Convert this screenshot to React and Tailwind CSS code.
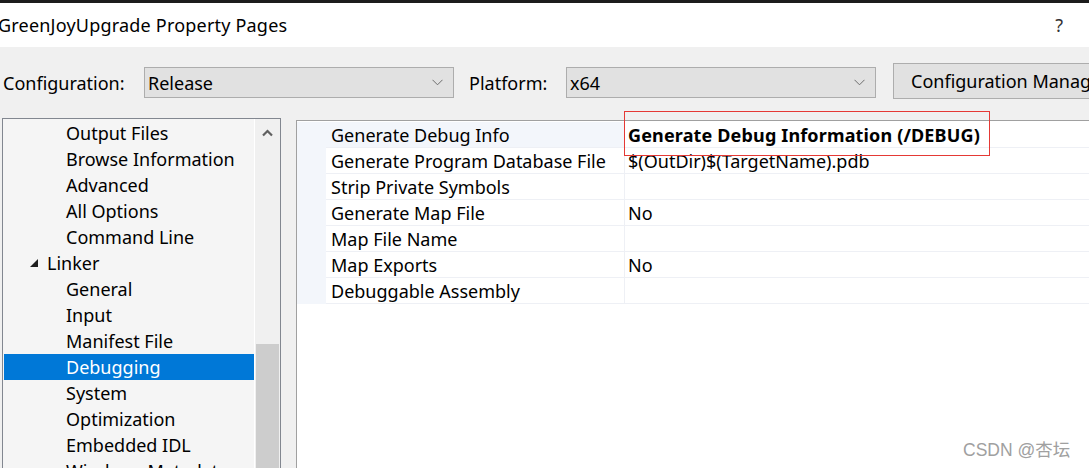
import React from "react";

const font = { fontFamily: "'Noto Sans', 'Open Sans', sans-serif" };

const treeItems = [
  { label: "Output Files", indent: 66 },
  { label: "Browse Information", indent: 66 },
  { label: "Advanced", indent: 66 },
  { label: "All Options", indent: 66 },
  { label: "Command Line", indent: 66 },
  { label: "Linker", indent: 47, expander: true },
  { label: "General", indent: 66 },
  { label: "Input", indent: 66 },
  { label: "Manifest File", indent: 66 },
  { label: "Debugging", indent: 66, selected: true },
  { label: "System", indent: 66 },
  { label: "Optimization", indent: 66 },
  { label: "Embedded IDL", indent: 66 },
  { label: "Windows Metadata", indent: 66 },
];

const props = [
  { name: "Generate Debug Info", value: "Generate Debug Information (/DEBUG)", bold: true, active: true },
  { name: "Generate Program Database File", value: "$(OutDir)$(TargetName).pdb" },
  { name: "Strip Private Symbols", value: "" },
  { name: "Generate Map File", value: "No" },
  { name: "Map File Name", value: "" },
  { name: "Map Exports", value: "No" },
  { name: "Debuggable Assembly", value: "" },
];

function Chevron() {
  return (
    <svg width="11" height="7" viewBox="0 0 11 7" className="shrink-0">
      <path d="M0.5 0.8 L5.5 5.8 L10.5 0.8" fill="none" stroke="#6d6d6d" strokeWidth="1" />
    </svg>
  );
}

function Dropdown({ value }) {
  return (
    <div className="mt-[3px] flex h-[31px] w-[310px] shrink-0 items-center justify-between border border-[#adadad] bg-[#e1e1e1] pl-[3px] pr-[10px] text-[18px] text-black">
      <span className="pt-[1px]">{value}</span>
      <Chevron />
    </div>
  );
}

export default function App() {
  return (
    <div className="relative h-[468px] w-[1089px] overflow-hidden bg-[#f0f0f0] text-black" style={font}>
      <div className="h-[3px] bg-[#1c1c1c]" />
      <div className="flex h-[44px] items-center justify-between bg-white pr-[26px]">
        <span className="-ml-[2px] text-[18px] leading-none tracking-[0.2px]">GreenJoyUpgrade Property Pages</span>
        <span className="text-[18px] leading-none text-[#333]">?</span>
      </div>

      <div className="flex items-center pt-[16px]">
        <span className="ml-[3px] w-[141px] shrink-0 pt-[4px] text-[18px]">Configuration:</span>
        <Dropdown value="Release" />
        <span className="ml-[15px] w-[97px] shrink-0 pt-[4px] text-[18px]">Platform:</span>
        <Dropdown value="x64" />
        <div className="ml-[17px] flex h-[36px] shrink-0 items-center whitespace-nowrap border border-[#adadad] bg-[#e1e1e1] pl-[17px] pr-[20px] text-[18px]">
          Configuration Manager...
        </div>
      </div>

      <div className="mt-[19px] flex items-start">
        <div className="ml-[2px] flex h-[360px] w-[279px] shrink-0 border-l border-t border-r border-[#828790] bg-[#f5f5f5]">
          <div className="flex-1 pt-[1px]">
            {treeItems.map((it) => (
              <div
                key={it.label}
                className={`relative flex h-[26px] items-center whitespace-nowrap text-[18px] ${
                  it.selected ? "ml-[1px] bg-[#0078d7] text-white" : ""
                }`}
                style={{ paddingLeft: it.selected ? it.indent - 4 : it.indent - 3 }}
              >
                {it.expander && (
                  <svg width="9" height="9" viewBox="0 0 9 9" className="absolute left-[27px] top-[9px]">
                    <polygon points="8,0 8,8 0,8" fill="#1e1e1e" />
                  </svg>
                )}
                {it.label}
              </div>
            ))}
          </div>
          <div className="flex w-[26px] flex-col border-l border-white bg-[#f0f0f0]">
            <div className="flex h-[26px] items-center justify-center pt-[2px]">
              <svg width="11" height="8" viewBox="0 0 11 8">
                <path d="M1 6.5 L5.5 2 L10 6.5" fill="none" stroke="#606060" strokeWidth="2.2" />
              </svg>
            </div>
            <div className="h-[199px]" />
            <div className="mx-[1px] flex-1 bg-[#cdcdcd]" />
          </div>
        </div>

        <div className="ml-[15px] mt-[2px] h-[360px] flex-1 border-l border-t border-[#a0a0a0] bg-white">
          <div className="flex pt-[1px]">
            <div className="w-[29px] shrink-0 bg-[#f3f6fb]" />
            <div>
              {props.map((p) => (
                <div key={p.name} className="flex h-[26px] border-b border-[#eef0f5] text-[18px]">
                  <div
                    className={`flex w-[299px] items-center whitespace-nowrap border-r border-[#eef0f5] pl-[5px] pt-[1px] ${
                      p.active ? "bg-[#f3f6fb]" : ""
                    }`}
                  >
                    {p.name}
                  </div>
                  <div
                    className={`flex w-[466px] items-center whitespace-nowrap pl-[3px] pt-[1px] ${
                      p.bold ? "font-bold tracking-[0.15px]" : ""
                    }`}
                  >
                    {p.value}
                  </div>
                </div>
              ))}
            </div>
          </div>
        </div>
      </div>

      <div className="absolute left-[624px] top-[111px] h-[45px] w-[366px] border border-[#e53935]" />

      <div
        className="absolute left-[963px] top-[437px] text-[17.5px] text-[#a0a0a0]"
        style={{ fontFamily: "'Liberation Sans', 'Noto Sans CJK SC', sans-serif" }}
      >
        CSDN @杏坛
      </div>
    </div>
  );
}
